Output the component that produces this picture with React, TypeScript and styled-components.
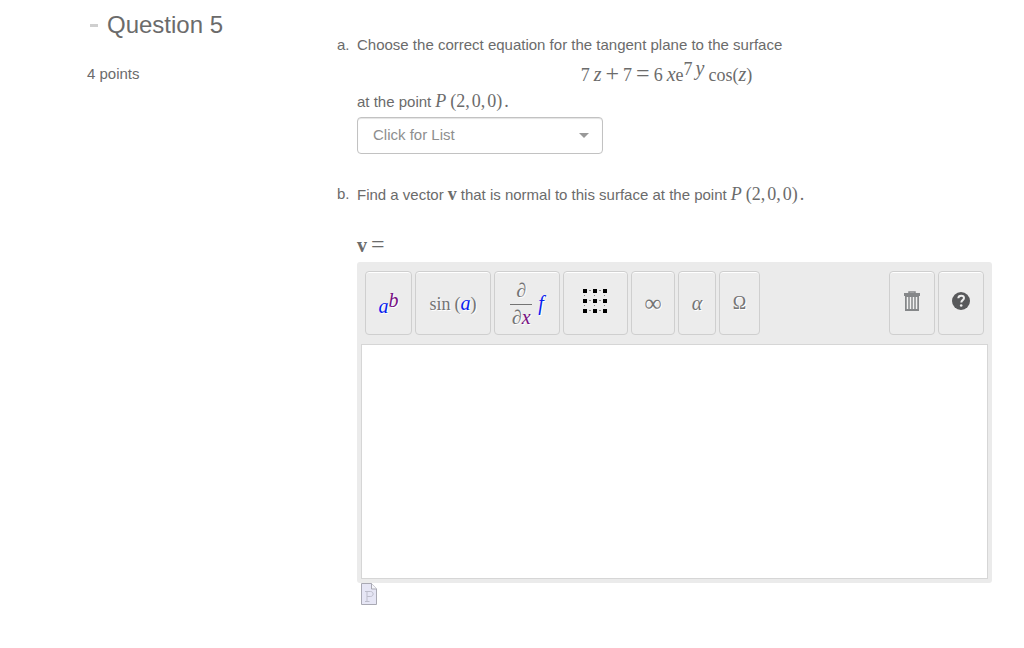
import React from "react";
import styled, { createGlobalStyle } from "styled-components";

const GlobalStyle = createGlobalStyle`
  *, *::before, *::after { box-sizing: border-box; }
  body {
    margin: 0;
    background: #fff;
    color: #6b6b6b;
    font-family: "Liberation Sans", Arial, sans-serif;
    font-size: 15px;
    line-height: 20px;
  }
`;

const Page = styled.main`
  display: grid;
  grid-template-columns: 250px minmax(0, 1fr);
  padding: 10px 32px 40px 87px;
`;

const Sidebar = styled.header`
  display: flex;
  flex-direction: column;
  gap: 24px;
`;

const Title = styled.h1`
  display: flex;
  align-items: center;
  gap: 9px;
  margin: 0;
  padding-left: 3px;
  font-size: 24px;
  line-height: 30px;
  font-weight: 400;
`;

const Dash = styled.span`
  width: 8px;
  height: 3px;
  background: #cfcfcf;
`;

const Points = styled.p`
  margin: 0;
`;

const Parts = styled.div`
  display: flex;
  flex-direction: column;
  gap: 30px;
  padding-top: 25px;
`;

const Part = styled.section`
  display: grid;
  grid-template-columns: 20px minmax(0, 1fr);
`;

const Line = styled.div`
  display: flex;
  align-items: baseline;
  gap: 4px;
  height: 26px;
  line-height: 20px;
  white-space: nowrap;
`;

const CenteredLine = styled(Line)`
  justify-content: center;
  padding-top: 2px;
  padding-right: 16px;
  height: 30px;
`;

const Answer = styled(Line)`
  margin-top: 24px;
  height: 28px;
`;

const MathRow = styled.span<{ $gap?: number }>`
  display: inline-flex;
  align-items: baseline;
  gap: ${(p) => p.$gap ?? 0}px;
  font-family: "Liberation Serif", "Times New Roman", serif;
  font-size: 18px;
  line-height: 20px;
`;

const Var = styled.i<{ $tone?: string }>`
  color: ${(p) => p.$tone ?? "inherit"};
  font-size: 20px;
`;

const Vector = styled.b`
  font-size: 20px;
`;

const Operator = styled.span`
  font-size: 24px;
`;

const Sup = styled.span`
  display: inline-flex;
  align-items: baseline;
  gap: 3px;
  position: relative;
  top: -6px;
`;

const Power = styled(MathRow)`
  padding-top: 6px;
`;

const SelectBox = styled.div`
  position: relative;
  width: 246px;
`;

const Select = styled.select`
  appearance: none;
  display: block;
  width: 100%;
  height: 37px;
  padding: 0 40px 2px 15px;
  border: 1px solid #c2c2c2;
  border-radius: 4px;
  background: #fff;
  box-shadow: inset 0 1px 1px #e4e4e4;
  color: #8e8e8e;
  font: inherit;
`;

const Arrow = styled.svg`
  position: absolute;
  right: 14px;
  top: 16px;
  pointer-events: none;
`;

const Editor = styled.div`
  padding: 9px 4px 4px;
  border-radius: 3px;
  background: #ebebeb;
`;

const Toolbar = styled.div`
  display: flex;
  gap: 3px;
  padding: 0 4px 9px;
`;

const Spacer = styled.span`
  flex: 1;
`;

const ToolButton = styled.button<{ $width: number }>`
  display: flex;
  align-items: center;
  justify-content: center;
  width: ${(p) => p.$width}px;
  height: 64px;
  padding: 0;
  border: 1px solid #cfcfcf;
  border-radius: 4px;
  background: #ececec;
  box-shadow: inset 0 1px 0 #fff;
  color: #747474;
  font-family: "Liberation Serif", "Times New Roman", serif;
  font-size: 18px;
  line-height: 20px;
  text-shadow: 1px 1px 0 #fff;
`;

const Formula = styled.span`
  display: flex;
  align-items: center;
  gap: 6px;
`;

const Fraction = styled.span`
  display: flex;
  flex-direction: column;
  align-items: center;
  width: 22px;
  font-size: 20px;
`;

const Numerator = styled.span`
  width: 100%;
  height: 27px;
  line-height: 24px;
  border-bottom: 1px solid #747474;
`;

const Denominator = styled.span`
  height: 24px;
  line-height: 24px;
`;

const Input = styled.textarea`
  display: block;
  width: 100%;
  height: 235px;
  padding: 8px;
  border: 1px solid #d6d6d6;
  background: #fff;
  font: inherit;
  resize: none;
`;

const Preview = styled.button`
  display: block;
  margin-left: 4px;
  padding: 0;
  border: 0;
  background: none;
`;

const BLUE = "#0a1eee";
const PURPLE = "#780f82";

const PointP = () => (
  <MathRow $gap={4}>
    <i>P</i>
    <MathRow $gap={2}>
      <span>(2,</span>
      <span>0,</span>
      <span>0)</span>
      <span>.</span>
    </MathRow>
  </MathRow>
);

const MatrixIcon = () => {
  const at = [2, 12, 22];
  return (
    <svg width="26" height="32" viewBox="0 0 26 32" aria-hidden="true">
      {at.map((y) =>
        at.map((x) => <rect key={`${x}-${y}`} x={x - 2} y={y} width="4" height="4" fill="#000" />)
      )}
      {at.map((p) =>
        [7, 17].map((q) => (
          <g key={`${p}-${q}`} fill="#888">
            <rect x={q - 1} y={p + 1} width="2" height="1" />
            <rect x={p - 1} y={q + 1} width="1" height="1" />
          </g>
        ))
      )}
    </svg>
  );
};

const TrashIcon = () => (
  <svg width="18" height="24" viewBox="0 0 18 24" aria-hidden="true">
    <path d="M6 2.500V1h6v1.500" fill="none" stroke="#858789" strokeWidth="1.500" />
    <rect x="1" y="2" width="16" height="3" fill="#858789" />
    <rect x="2" y="5" width="14" height="15" fill="#858789" />
    <path d="M4.500 6v12M7.500 6v12M10.500 6v12M13.500 6v12" stroke="#f2f2f2" strokeWidth="1.500" />
  </svg>
);

const HelpIcon = () => (
  <svg width="20" height="24" viewBox="0 0 20 24" aria-hidden="true">
    <circle cx="10" cy="10" r="9" fill="#58595b" />
    <path d="M7.300 7.200C7.500 3.800 13 3.900 13 7.100C13 9.300 10.300 9 10.300 11.500" fill="none" stroke="#eee" strokeWidth="2" />
    <circle cx="10.200" cy="14.500" r="1.300" fill="#eee" />
  </svg>
);

const PageIcon = () => (
  <svg width="16" height="22" viewBox="0 0 16 22" aria-hidden="true">
    <path d="M.5 .5H10.500L15.500 6V21.500H.5Z" fill="#e6e6f5" stroke="#a9a9b3" />
    <path d="M10.500 .5V6H15.500" fill="#f5f5fa" stroke="#a9a9b3" />
    <path d="M4 8.500H9.500C13 8.500 13 13.500 9.500 13.500H6M6 8.500V18.500M4 18.500H8.500" fill="none" stroke="#bdbdcb" />
  </svg>
);

export default function App() {
  return (
    <>
      <GlobalStyle />
      <Page>
        <Sidebar>
          <Title>
            <Dash />
            Question 5
          </Title>
          <Points>4 points</Points>
        </Sidebar>
        <Parts>
          <Part>
            <span>a.</span>
            <div>
              <Line>Choose the correct equation for the tangent plane to the surface</Line>
              <CenteredLine>
                <MathRow $gap={4}>
                  <MathRow $gap={4}>
                    <span>7</span>
                    <Var>z</Var>
                  </MathRow>
                  <Operator>+</Operator>
                  <span>7</span>
                  <Operator>=</Operator>
                  <MathRow $gap={4}>
                    <span>6</span>
                    <MathRow>
                      <Var>x</Var>
                      <span>e</span>
                      <Sup>
                        <span>7</span>
                        <Var>y</Var>
                      </Sup>
                    </MathRow>
                  </MathRow>
                  <span>
                    cos(<Var>z</Var>)
                  </span>
                </MathRow>
              </CenteredLine>
              <Line>
                <label htmlFor="plane">at the point</label>
                <PointP />
              </Line>
              <SelectBox>
                <Select id="plane" defaultValue="">
                  <option value="">Click for List</option>
                </Select>
                <Arrow width="10" height="5" viewBox="0 0 10 5" aria-hidden="true">
                  <path d="M0 0H10L5 5Z" fill="#999" />
                </Arrow>
              </SelectBox>
            </div>
          </Part>
          <Part>
            <span>b.</span>
            <div>
              <Line>
                <span>Find a vector</span>
                <MathRow>
                  <b>v</b>
                </MathRow>
                <span>that is normal to this surface at the point</span>
                <PointP />
              </Line>
              <Answer>
                <label htmlFor="vector">
                  <MathRow $gap={4}>
                    <Vector>v</Vector>
                    <Operator>=</Operator>
                  </MathRow>
                </label>
              </Answer>
              <Editor>
                <Toolbar>
                  <ToolButton $width={47} aria-label="Exponent">
                    <Power>
                      <Var $tone={BLUE}>a</Var>
                      <Sup>
                        <Var $tone={PURPLE}>b</Var>
                      </Sup>
                    </Power>
                  </ToolButton>
                  <ToolButton $width={76} aria-label="Functions">
                    <MathRow $gap={4}>
                      <span>sin</span>
                      <span>
                        (<Var $tone={BLUE}>a</Var>)
                      </span>
                    </MathRow>
                  </ToolButton>
                  <ToolButton $width={66} aria-label="Calculus">
                    <Formula>
                      <Fraction>
                        <Numerator>∂</Numerator>
                        <Denominator>
                          ∂<Var $tone={PURPLE}>x</Var>
                        </Denominator>
                      </Fraction>
                      <Var $tone={BLUE}>f</Var>
                    </Formula>
                  </ToolButton>
                  <ToolButton $width={65} aria-label="Matrix">
                    <MatrixIcon />
                  </ToolButton>
                  <ToolButton $width={44}>
                    <Operator>∞</Operator>
                  </ToolButton>
                  <ToolButton $width={38}>
                    <Var>α</Var>
                  </ToolButton>
                  <ToolButton $width={41}>Ω</ToolButton>
                  <Spacer />
                  <ToolButton $width={46} aria-label="Clear">
                    <TrashIcon />
                  </ToolButton>
                  <ToolButton $width={46} aria-label="Help">
                    <HelpIcon />
                  </ToolButton>
                </Toolbar>
                <Input id="vector" />
              </Editor>
              <Preview aria-label="Preview">
                <PageIcon />
              </Preview>
            </div>
          </Part>
        </Parts>
      </Page>
    </>
  );
}
